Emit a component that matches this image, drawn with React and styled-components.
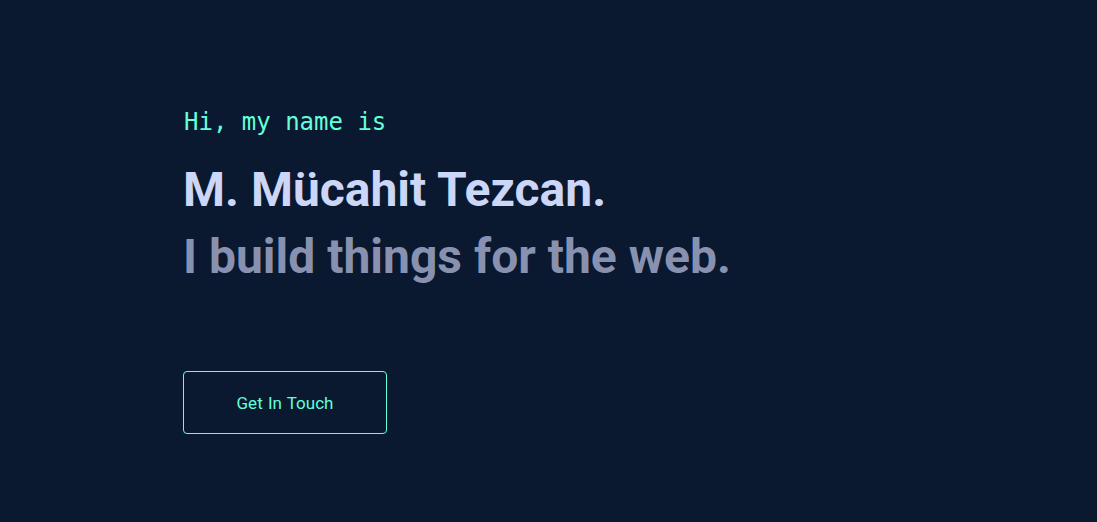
import React from "react";
import styled, { createGlobalStyle } from "styled-components";

const GlobalStyle = createGlobalStyle`
    * {
        box-sizing: border-box;
    }
    body {
        margin: 0;
        background-color: #0a192f;
        font-family: Roboto, "Liberation Sans", sans-serif;
    }
`;

const App = () => {
    return (
        <>
            <GlobalStyle />
            <Hero>
                <Intro>Hi, my name is</Intro>
                <Name>M. Mücahit Tezcan.</Name>
                <Tagline>I build things for the web.</Tagline>
                <ContactButton>Get In Touch</ContactButton>
            </Hero>
        </>
    );
};

const Hero = styled.section`
    display: flex;
    flex-direction: column;
    align-items: flex-start;
    width: 100vw;
    height: 522px;
    padding: 106px 0 0 183px;
    background-color: #0a192f;
`;

const Intro = styled.p`
    margin: 0 0 0 1px;
    font-family: "DejaVu Sans Mono", "Liberation Mono", monospace;
    font-size: 24px;
    line-height: 32px;
    color: #64ffda;
`;

const Name = styled.h1`
    margin: 18px 0 0 0;
    font-size: 48px;
    font-weight: 700;
    line-height: 67px;
    color: #ccd6f6;
`;

const Tagline = styled.h2`
    margin: 0;
    font-size: 48px;
    font-weight: 700;
    line-height: 67px;
    color: #8892b0;
`;

const ContactButton = styled.button`
    display: flex;
    justify-content: center;
    align-items: center;
    width: 204px;
    height: 63px;
    margin-top: 81px;
    padding: 0;
    border: 1px solid #64ffda;
    border-radius: 4px;
    background: transparent;
    font-family: Roboto, "Liberation Sans", sans-serif;
    font-size: 17px;
    word-spacing: 1px;
    color: #64ffda;
    cursor: pointer;
`;

export default App;
